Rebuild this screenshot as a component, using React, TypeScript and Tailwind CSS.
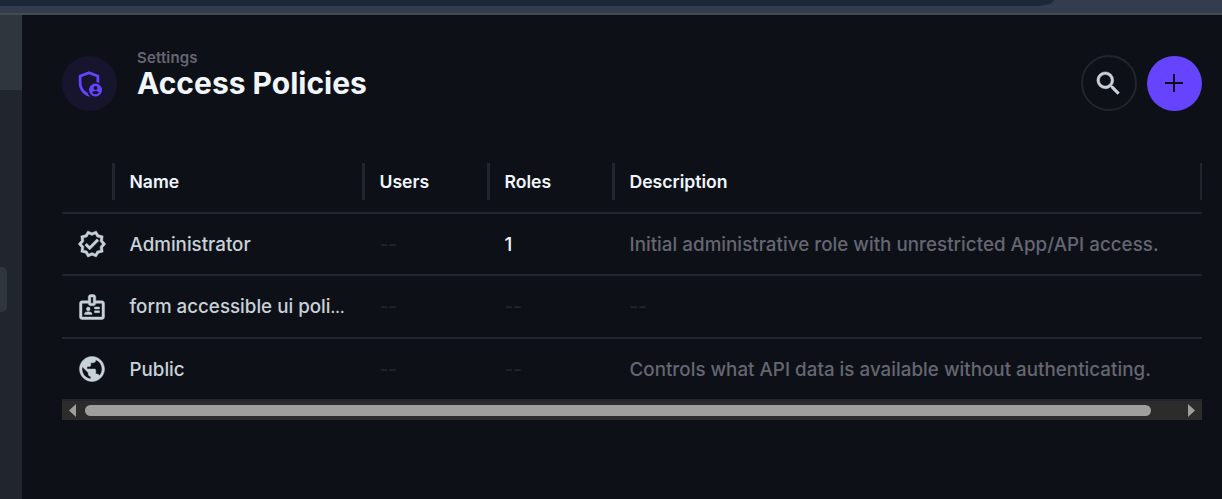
import type { ReactNode } from "react";
import { MdOutlineBadge, MdOutlineVerified, MdPublic, MdSearch } from "react-icons/md";

type Policy = {
  icon: ReactNode;
  name: string;
  users?: string;
  roles?: string;
  description?: string;
  rowClass: string;
  nameClass: string;
};

const policies: Policy[] = [
  {
    icon: <MdOutlineVerified size={30} stroke="currentColor" strokeWidth={0.35} />,
    name: "Administrator",
    roles: "1",
    description: "Initial administrative role with unrestricted App/API access.",
    rowClass: "h-[62px] *:not-first:pt-0.5",
    nameClass: "",
  },
  {
    icon: <MdOutlineBadge size={30} stroke="currentColor" strokeWidth={0.35} />,
    name: "form accessible ui policy",
    rowClass: "h-[63px]",
    nameClass: "pt-0.5",
  },
  {
    icon: <MdPublic size={30} stroke="currentColor" strokeWidth={0.35} />,
    name: "Public",
    description: "Controls what API data is available without authenticating.",
    rowClass: "h-[62px] *:not-first:pt-0.5",
    nameClass: "",
  },
];

const columns = "grid grid-cols-[50px_250px_125px_125px_1fr]";

function ShieldPersonIcon() {
  return (
    <svg className="mr-0.5" width="30" height="30" viewBox="0 0 24 24" fill="currentColor">
      <path d="M12 1.8 3.8 4.9v6.19c0 5.15 3.5 9.86 8.2 11.01l.6-.15a7.2 7.2 0 0 1-1.7-2.9C8 17.6 6 14.6 6 11.09V6.45l6-2.2 6 2.2v4.12c.8.1 1.5.3 2.2.6V4.9L12 1.8z" />
      <path
        fillRule="evenodd"
        d="M17.2 11.6a5.2 5.2 0 1 0 0 10.4 5.2 5.2 0 0 0 0-10.4zm0 2a1.6 1.6 0 1 1 0 3.2 1.6 1.6 0 0 1 0-3.2zm0 6.6a3.1 3.1 0 0 1-2.7-1.5c.3-.8 1.6-1.2 2.7-1.2s2.4.4 2.7 1.2a3.1 3.1 0 0 1-2.7 1.5z"
      />
    </svg>
  );
}

function Value({ children, className }: { children?: string; className: string }) {
  return (
    <div className="truncate pl-[17.5px]">
      {children ? <span className={className}>{children}</span> : <span className="text-[#21262e]">--</span>}
    </div>
  );
}

function HeaderCell({ children }: { children: string }) {
  return (
    <div className="flex h-[37px] items-center border-l-3 border-[#21262e] pt-0.5 pl-[14.5px]">{children}</div>
  );
}

export default function App() {
  return (
    <div className="flex h-[499px] w-full flex-col overflow-hidden bg-[#0d1117] font-['Inter',sans-serif]">
      <div className="h-[15px] shrink-0 border-b-2 border-[#434a50] bg-[#343d4f]">
        <div className="h-1.5 w-[1054px] rounded-br-[18px_6px] bg-[#1d273a]" />
      </div>
      <div className="flex min-h-0 flex-1">
        <aside className="w-[22px] shrink-0 bg-[#21262e]">
          <div className="h-[75px] bg-[#30363d]" />
          <div className="mt-[177px] h-[45px] w-[7px] rounded-r-[5px] bg-[#30363d]" />
        </aside>
        <main className="min-w-0 flex-1 pr-5 pl-10">
          <header className="flex h-24 items-end">
            <div className="flex size-[55px] items-center justify-center rounded-full bg-[#16152d] text-[#6644ff]">
              <ShieldPersonIcon />
            </div>
            <div className="ml-5 h-[62px] flex-1">
              <div className="text-[15px] leading-[18px] font-semibold tracking-[0.15px] text-[#666672]">Settings</div>
              <h1 className="text-[30px] leading-[32px] font-bold text-[#f0f6fc]">Access Policies</h1>
            </div>
            <button className="flex size-14 items-center justify-center rounded-full border-2 border-[#21262e] pr-px text-[#c9d1d9]">
              <MdSearch className="[&_path[fill=none]]:[stroke:none]" size={31} stroke="currentColor" strokeWidth={0.4} />
            </button>
            <button className="ml-2.5 flex size-[55px] items-center justify-center rounded-full bg-[#6644ff] pr-px pb-px text-[#0d1117]">
              <svg width="18" height="18" viewBox="0 0 18 18" fill="currentColor">
                <path d="M8 0h2v8h8v2h-8v8H8v-8H0V8h8z" />
              </svg>
            </button>
          </header>

          <section className="mt-[52px] w-[1140px]">
            <div className="border-b-2 border-[#21262e] pb-3 text-[17.6px] font-semibold text-[#f0f6fc]">
              <div className={columns}>
                <div />
                <HeaderCell>Name</HeaderCell>
                <HeaderCell>Users</HeaderCell>
                <HeaderCell>Roles</HeaderCell>
                <div className="flex border-r-2 border-[#21262e]">
                  <HeaderCell>Description</HeaderCell>
                </div>
              </div>
            </div>
            {policies.map((policy) => (
              <div
                key={policy.name}
                className={`${columns} ${policy.rowClass} items-center border-b-2 border-[#21262e] text-[18.75px] leading-[30px] font-medium tracking-[0.03px]`}
              >
                <div className="pl-[15px] text-[#c9d1d9] [&_path[fill=none]]:[stroke:none] [&_rect[fill=none]]:[stroke:none]">
                  {policy.icon}
                </div>
                <div
                  className={`truncate pr-[13px] pl-[17.5px] text-[15.5px] leading-[30px] tracking-normal text-[#c9d1d9] ${policy.nameClass}`}
                >
                  <span className="text-[18.75px]">{policy.name}</span>
                </div>
                <Value className="text-[#c9d1d9]">{policy.users}</Value>
                <Value className="text-[#f0f6fc]">{policy.roles}</Value>
                <Value className="text-[#666672]">{policy.description}</Value>
              </div>
            ))}
            <div className="flex h-[19px] items-center bg-[#2c2c2c] px-[7px]">
              <svg className="h-[13px] w-[7px]" viewBox="0 0 7 13" fill="#9f9f9f">
                <path d="M7 0v13L0 6.5z" />
              </svg>
              <div className="ml-[9px] h-[11px] w-[1066px] rounded-full bg-[#9f9f9f]" />
              <svg className="ml-auto h-[13px] w-[7px]" viewBox="0 0 7 13" fill="#9f9f9f">
                <path d="M0 0v13l7-6.5z" />
              </svg>
            </div>
          </section>
        </main>
      </div>
    </div>
  );
}
